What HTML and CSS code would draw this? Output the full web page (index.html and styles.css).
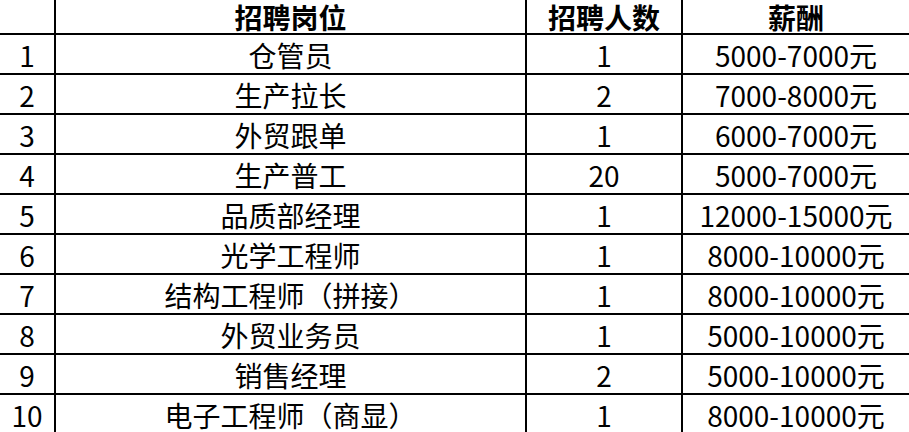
FILE: index.html
```html
<!DOCTYPE html>
<html lang="zh-CN">
<head>
<meta charset="utf-8">
<title>招聘岗位</title>
<link rel="stylesheet" href="styles.css">
</head>
<body>
<div class="sheet">
  <div class="cell head"></div>
  <div class="cell head">招聘岗位</div>
  <div class="cell head">招聘人数</div>
  <div class="cell head">薪酬</div>

  <div class="cell">1</div><div class="cell">仓管员</div><div class="cell">1</div><div class="cell">5000-7000元</div>
  <div class="cell">2</div><div class="cell">生产拉长</div><div class="cell">2</div><div class="cell">7000-8000元</div>
  <div class="cell">3</div><div class="cell">外贸跟单</div><div class="cell">1</div><div class="cell">6000-7000元</div>
  <div class="cell">4</div><div class="cell">生产普工</div><div class="cell">20</div><div class="cell">5000-7000元</div>
  <div class="cell">5</div><div class="cell">品质部经理</div><div class="cell">1</div><div class="cell">12000-15000元</div>
  <div class="cell">6</div><div class="cell">光学工程师</div><div class="cell">1</div><div class="cell">8000-10000元</div>
  <div class="cell">7</div><div class="cell">结构工程师（拼接）</div><div class="cell">1</div><div class="cell">8000-10000元</div>
  <div class="cell">8</div><div class="cell">外贸业务员</div><div class="cell">1</div><div class="cell">5000-10000元</div>
  <div class="cell">9</div><div class="cell">销售经理</div><div class="cell">2</div><div class="cell">5000-10000元</div>
  <div class="cell">10</div><div class="cell">电子工程师（商显）</div><div class="cell">1</div><div class="cell">8000-10000元</div>
</div>
</body>
</html>
```
FILE: styles.css
```css
html, body {
  margin: 0;
  padding: 0;
  background: #ffffff;
  overflow: hidden;
}
body {
  width: 909px;
  height: 432px;
}
.sheet {
  display: grid;
  grid-template-columns: 54px 469px 154px 1fr;
  grid-template-rows: 33px repeat(10, 38px);
  gap: 2px;
  background: #000000;
  width: 909px;
  font-family: "Noto Sans CJK SC", "Noto Sans", sans-serif;
  font-size: 28px;
  color: #000000;
}
.cell {
  background: #ffffff;
  display: flex;
  align-items: center;
  justify-content: center;
  line-height: 1;
  white-space: nowrap;
  padding-top: 2px;
  box-sizing: border-box;
}
.head {
  font-weight: 700;
  padding-top: 0;
}
```
